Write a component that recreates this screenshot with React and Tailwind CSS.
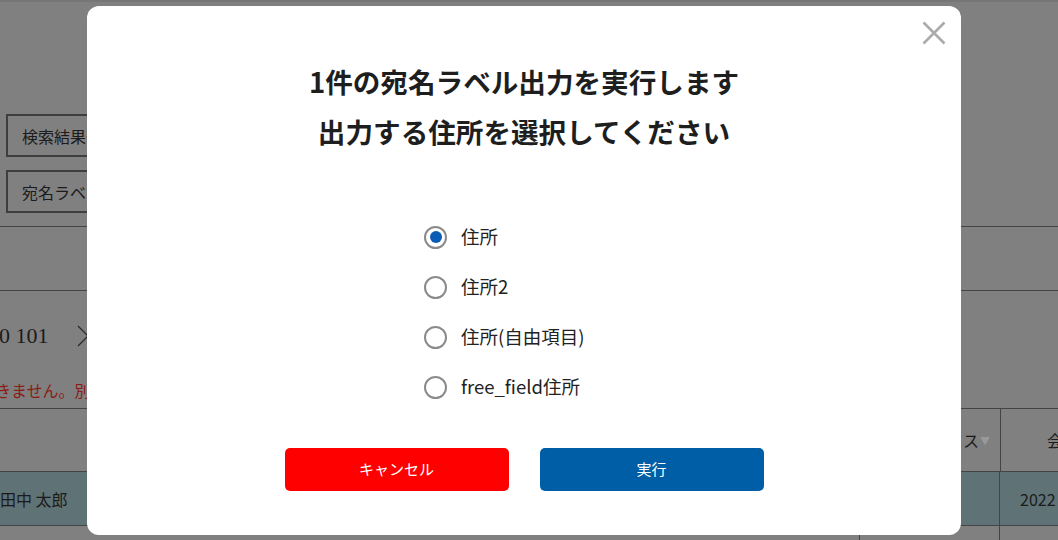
export default function App() {
  const font = { fontFamily: '"Noto Sans CJK JP", "Noto Sans", sans-serif' };
  const options = ["住所", "住所2", "住所(自由項目)", "free_field住所"];
  return (
    <div className="relative h-[540px] w-full overflow-hidden bg-[#808080] text-[#1b1b1b]" style={font}>
      <div className="h-[2px] bg-[#767676]" />
      {/* background page (dimmed) */}
      <div className="flex flex-col">
        <div className="flex flex-col gap-[13px] pl-[6px] pt-[112px]">
          <div className="flex h-[43px] w-[220px] items-center border-2 border-[#3e3e3e] pl-[14px] text-[16px]">検索結果一覧出力</div>
          <div className="flex h-[43px] w-[220px] items-center border-2 border-[#3e3e3e] pl-[14px] text-[16px]">宛名ラベル出力</div>
        </div>
        <div className="mt-[13px] h-[1px] bg-[#444]" />
        <div className="h-[63px]" />
        <div className="h-[1px] bg-[#444]" />
        <div className="flex h-[88px] items-center pt-[1px]">
          <span className="ml-[-23px] text-[22px]" style={{ fontFamily: '"Liberation Serif", serif' }}>100 101</span>
          <svg className="ml-[28px]" width="12" height="22" viewBox="0 0 12 22">
            <path d="M1 1 L11 11 L1 21" fill="none" stroke="#2a2a2a" strokeWidth="1.3" />
          </svg>
        </div>
        <div className="flex h-[29px] items-start">
          <span className="ml-[-21px] text-[16px] leading-[22px] text-[#8a1c14]">できません。別の条件で検索してください</span>
        </div>
        <div className="h-[1px] bg-[#444]" />
        <div className="flex h-[62px]">
          <div className="flex-1" />
          <div className="flex w-[140px] items-center justify-end border-r border-[#444] pr-[10px] text-[16px]">
            ステータス<span className="ml-[1px] text-[10px] text-[#999]">▼</span>
          </div>
          <div className="flex w-[57px] items-center text-[16px]">
            <span className="ml-[46px] whitespace-nowrap">会員</span>
          </div>
        </div>
        <div className="h-[1px] bg-[#444]" />
        <div className="flex h-[53px] bg-[#5f7276]">
          <div className="flex w-[620px] items-center text-[16px]">
            <span className="ml-[-16px]">山田中 太郎</span>
          </div>
          <div className="w-[240px] border-r border-[#444]" />
          <div className="w-[140px] border-r border-[#444]" />
          <div className="flex flex-1 items-center pl-[20px] text-[16px]">2022</div>
        </div>
        <div className="h-[1px] bg-[#444]" />
        <div className="flex h-[20px]">
          <div className="w-[860px] border-r border-[#444]" />
          <div className="w-[140px] border-r border-[#444]" />
        </div>
      </div>

      {/* modal */}
      <div className="absolute left-[87px] top-[6px] flex h-[529px] w-[874px] flex-col items-center rounded-[12px] bg-white">
        <button className="absolute left-[835px] top-[15px] h-[24px] w-[24px]">
          <svg width="24" height="24" viewBox="0 0 24 24">
            <path d="M1.5 1.5 L22.5 22.5 M22.5 1.5 L1.5 22.5" stroke="#ababab" strokeWidth="2.6" />
          </svg>
        </button>
        <div className="pt-[50px] text-center text-[27.6px] font-bold leading-[50px] text-[#1e1e1e]">
          <div>1件の宛名ラベル出力を実行します</div>
          <div>出力する住所を選択してください</div>
        </div>
        <div className="mt-[56px] flex w-[200px] flex-col">
          {options.map((o, i) => (
            <div key={o} className="flex h-[50px] items-center">
              <span className="flex h-[23px] w-[23px] shrink-0 items-center justify-center rounded-full border-2 border-[#8a8a8a]">
                {i === 0 && <span className="h-[12px] w-[12px] rounded-full bg-[#0b5cb5]" />}
              </span>
              <span className="ml-[14px] whitespace-nowrap text-[18.5px] text-[#222]">{o}</span>
            </div>
          ))}
        </div>
        <div className="mt-[36px] flex gap-[31px]">
          <button className="flex h-[43px] w-[224px] items-center justify-center rounded-[5px] bg-[#ff0000] text-[15px] text-white">キャンセル</button>
          <button className="flex h-[43px] w-[224px] items-center justify-center rounded-[5px] bg-[#005ea6] text-[15px] text-white">実行</button>
        </div>
      </div>
    </div>
  );
}
